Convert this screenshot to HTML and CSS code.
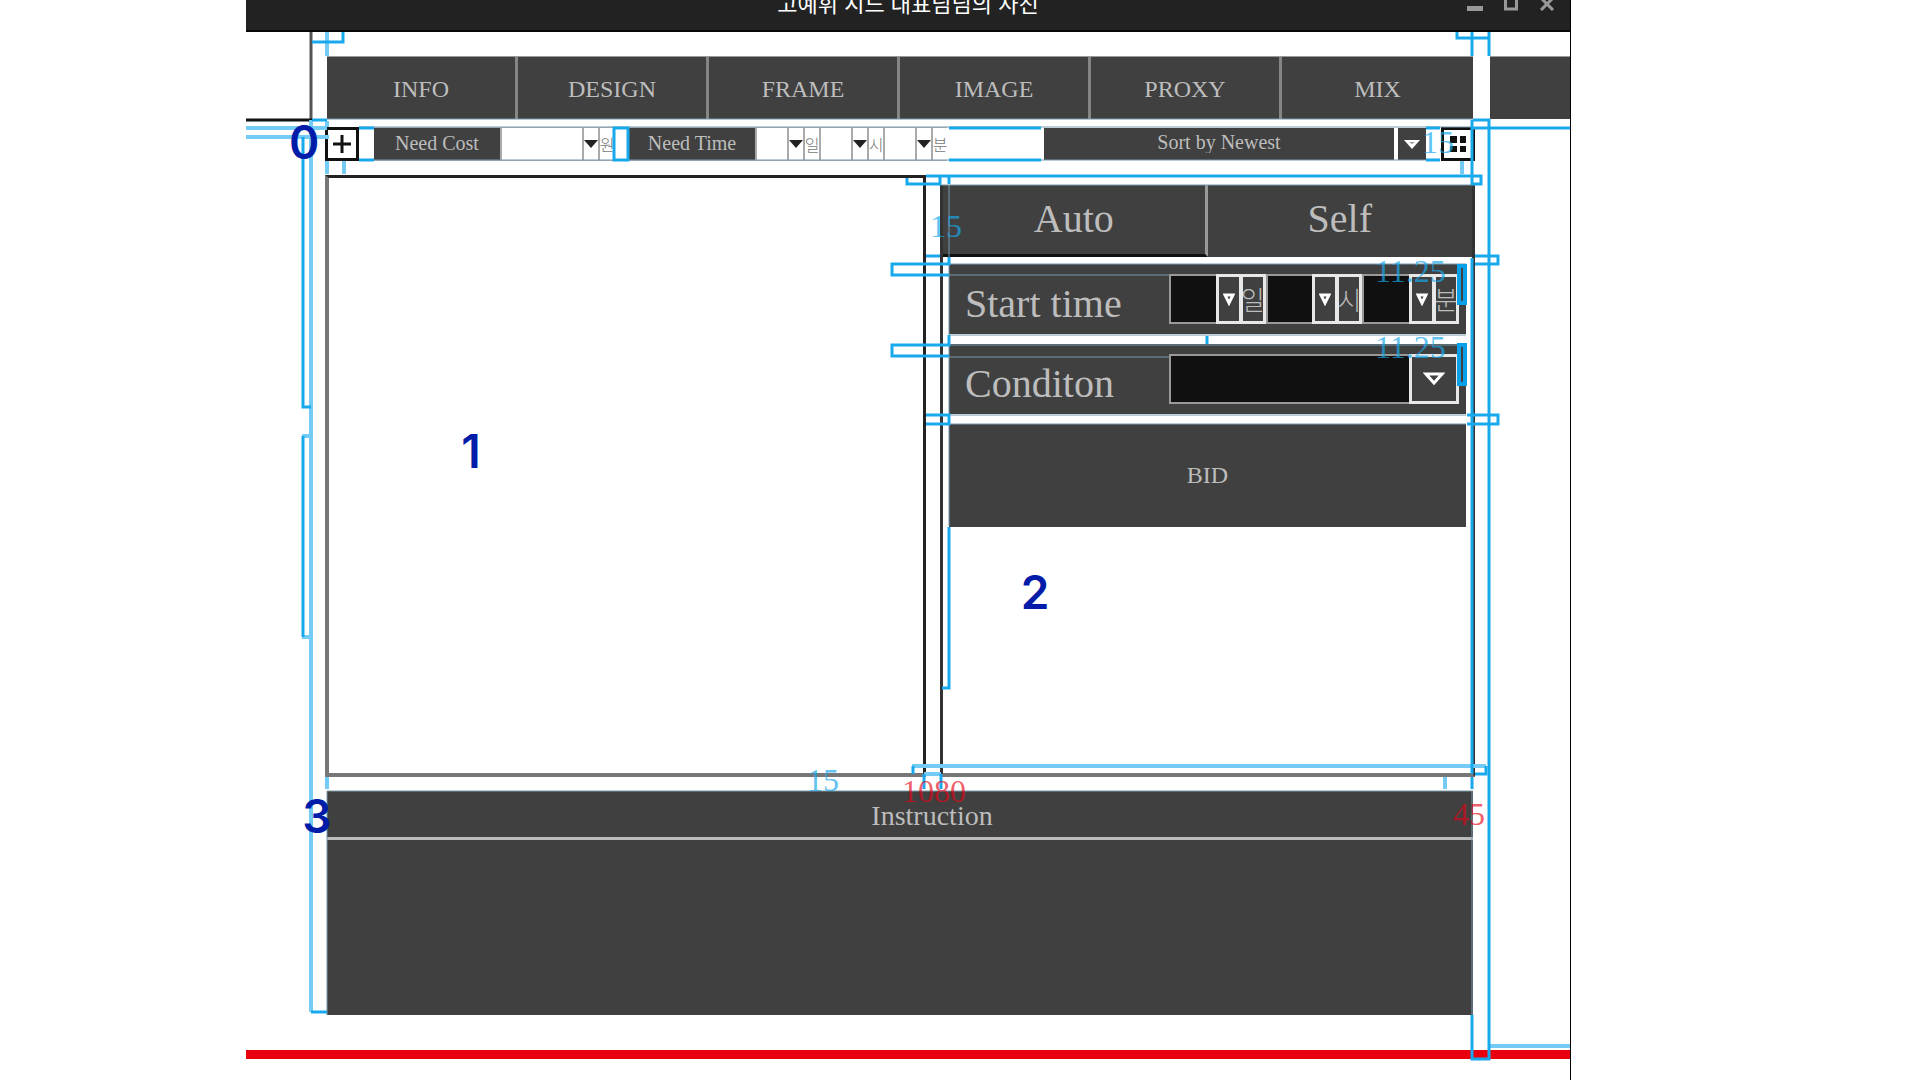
FILE: index.html
```html
<!DOCTYPE html>
<html lang="ko">
<head>
<meta charset="utf-8">
<title>고예휘 시드 대표님님의 사진</title>
<link rel="stylesheet" href="styles.css">
</head>
<body>
<div class="window">
  <header class="titlebar">
    <h1 class="title">고예휘 시드 대표님님의 사진</h1>
    <div class="window-buttons">
      <button type="button" aria-label="Minimize"><svg width="16" height="16"><path d="M0 13.500H16" stroke="#999" stroke-width="5"/></svg></button>
      <button type="button" aria-label="Maximize"><svg width="16" height="16"><rect x="2.500" y="3" width="11" height="11" fill="none" stroke="#999" stroke-width="3"/></svg></button>
      <button type="button" aria-label="Close"><svg width="16" height="16"><path d="M2 3L14 15M14 3L2 15" stroke="#999" stroke-width="3"/></svg></button>
    </div>
  </header>

  <div class="nav-row">
    <nav class="nav">
      <a href="#info">INFO</a>
      <a href="#design">DESIGN</a>
      <a href="#frame">FRAME</a>
      <a href="#image">IMAGE</a>
      <a href="#proxy">PROXY</a>
      <a href="#mix">MIX</a>
    </nav>
    <div class="nav-next"></div>
  </div>

  <main class="board">
    <div class="toolbar">
      <button type="button" class="square" aria-label="Add"><svg width="20" height="20"><path d="M10 1V19M1 10H19" stroke="#111" stroke-width="3"/></svg></button>
      <div class="filter">
        <label class="tag" for="cost">Need Cost</label>
        <div class="pick pick-wide">
          <select id="cost"></select>
          <span class="caret"><svg width="14" height="10"><path d="M0 1H14L7 9Z" fill="#222"/></svg></span>
          <label class="unit" for="cost">원</label>
        </div>
      </div>
      <div class="filter">
        <label class="tag" for="need-day">Need Time</label>
        <div class="pick">
          <select id="need-day"></select>
          <span class="caret"><svg width="14" height="10"><path d="M0 1H14L7 9Z" fill="#222"/></svg></span>
          <label class="unit" for="need-day">일</label>
        </div>
        <div class="pick">
          <select id="need-hour"></select>
          <span class="caret"><svg width="14" height="10"><path d="M0 1H14L7 9Z" fill="#222"/></svg></span>
          <label class="unit" for="need-hour">시</label>
        </div>
        <div class="pick">
          <select id="need-minute"></select>
          <span class="caret"><svg width="14" height="10"><path d="M0 1H14L7 9Z" fill="#222"/></svg></span>
          <label class="unit" for="need-minute">분</label>
        </div>
      </div>
      <div class="sort">
        <select aria-label="Sort order"><option>Sort by Newest</option></select>
        <span class="sort-caret"><svg width="16" height="10"><path d="M0 1H16L8 10Z" fill="#fff"/><path d="M5 3H11L8 5Z" fill="#999"/></svg></span>
      </div>
      <button type="button" class="square" aria-label="Grid view"><svg width="18" height="18"><path d="M1 1H8V8H1ZM11 1H17V8H11ZM1 11H8V17H1ZM11 11H17V17H11Z" fill="#111"/></svg></button>
    </div>

    <div class="panels">
      <section class="canvas"></section>
      <section class="bid-panel">
        <div class="tabs">
          <button type="button" class="tab tab-active">Auto</button>
          <button type="button" class="tab">Self</button>
        </div>
        <form class="bid-form">
          <div class="row">
            <label class="row-name" for="start-day">Start time</label>
            <div class="fields">
              <div class="dark-pick">
                <select id="start-day"></select>
                <span class="box"><svg width="12" height="13"><path d="M2 2H10L6 10Z" fill="none" stroke="#fff" stroke-width="3"/></svg></span>
                <label class="box" for="start-day">일</label>
              </div>
              <div class="dark-pick">
                <select id="start-hour"></select>
                <span class="box"><svg width="12" height="13"><path d="M2 2H10L6 10Z" fill="none" stroke="#fff" stroke-width="3"/></svg></span>
                <label class="box" for="start-hour">시</label>
              </div>
              <div class="dark-pick">
                <select id="start-minute"></select>
                <span class="box"><svg width="12" height="13"><path d="M2 2H10L6 10Z" fill="none" stroke="#fff" stroke-width="3"/></svg></span>
                <label class="box" for="start-minute">분</label>
              </div>
            </div>
          </div>
          <div class="row">
            <label class="row-name" for="condition">Conditon</label>
            <div class="fields">
              <div class="dark-pick">
                <select id="condition"></select>
                <span class="box box-wide"><svg width="22" height="14"><path d="M3 2H19L11 11Z" fill="none" stroke="#fff" stroke-width="3"/></svg></span>
              </div>
            </div>
          </div>
          <button type="submit" class="bid">BID</button>
        </form>
      </section>
    </div>

    <section class="instruction">
      <h2>Instruction</h2>
      <div class="instruction-body"></div>
    </section>
  </main>
  <div class="page-end"></div>

  <!-- Spacing guides drawn over the layout -->
  <svg class="guides" viewBox="246 0 1324 1080" preserveAspectRatio="none" aria-hidden="true">
    <g class="ink">
      <path d="M311 32V120" stroke="#555"/>
      <path d="M246 120H312" stroke="#111"/>
    </g>
    <g class="soft">
      <path d="M327 32V56M311 120V1012M327 121V127M327 161V174M344 161V174M1462 161V174M327 777V789M1445 777V789"/>
      <path d="M246 128H327M246 137H329M302 436H311M302 637H311M912 766H1486M1489 1046H1570M924 774H941"/>
    </g>
    <g class="thin">
      <path d="M327 119H1473M359 127H1473M359 160H1426M942 185H1473M949 264H1466M949 275H1170M949 335H1466M949 345H1466M949 357H1170M949 415H1466M949 424H1466M949 185V526M327 791H1473M327 791V1015M1472 791V1015"/>
    </g>
    <g class="strong">
      <path d="M312 42H343V32M312 120H327M303 137V407H311M303 436V637M311 1012H327"/>
      <path d="M1457 32V38H1489M1472 32V56M1489 32V56M1473 120H1489V1059H1472V1015M1472 120V185M1473 128H1570"/>
      <path d="M359 128H374M359 160H374M614 128H628V160H614ZM949 128H1041M949 160H1041M1426 128H1440M1426 160H1440"/>
      <path d="M926 176H1481V184H1472M907 178V184H940V176M949 176V184"/>
      <path d="M926 256H940M949 257V264H892V275H949M949 335V345H892V356H949M926 415H949V424H926M1207 336V344"/>
      <path d="M1475 256H1498V264H1475M1467 415H1498V424H1467M1472 258V774M949 527V688H942"/>
      <path d="M913 766V774M1486 766V774H1475M924 774V789M941 774V789M1472 777V789"/>
    </g>
    <path class="heavy" d="M1459 266H1465V303H1459ZM1459 345H1465V384H1459Z"/>
  </svg>
  <span class="size at-grid">15</span>
  <span class="size at-gutter">15</span>
  <span class="size at-start">11.25</span>
  <span class="size at-condition">11.25</span>
  <span class="size at-bottom">15</span>
  <span class="size total at-width">1080</span>
  <span class="size total at-edge">45</span>
  <span class="mark mark-0">0</span>
  <span class="mark mark-1">1</span>
  <span class="mark mark-2">2</span>
  <span class="mark mark-3">3</span>
</div>
</body>
</html>
```
FILE: styles.css
```css
* { box-sizing: border-box; }

body {
  margin: 0;
  background: #fff;
  font-family: "Liberation Serif", "Noto Sans CJK KR", serif;
  color: #bdbdbd;
}

button, select {
  margin: 0;
  padding: 0;
  border: 0;
  border-radius: 0;
  background: none;
  color: inherit;
  font: inherit;
  appearance: none;
}

svg { display: block; }

.window {
  position: relative;
  min-height: 100vh;
  margin: 0 349px 0 246px;
  border-right: 1px solid #000;
  overflow: hidden;
}

/* Title bar */
.titlebar {
  display: grid;
  grid-template-columns: 1fr auto 1fr;
  height: 32px;
  background: #222;
  border-bottom: 2px solid #080808;
}
.title {
  grid-column: 2;
  margin: -14px 0 0;
  font: 400 22px/32px "Noto Sans CJK KR", sans-serif;
  color: #fff;
}
.window-buttons {
  display: flex;
  justify-content: flex-end;
  gap: 20px;
  height: 16px;
  margin-top: -5px;
  padding-right: 15px;
}

/* Navigation */
.nav-row {
  display: flex;
  gap: 17px;
  margin-top: 24px;
  padding-left: 81px;
}
.nav {
  display: grid;
  grid-template-columns: repeat(6, 1fr);
  flex: 1;
  height: 63px;
  background: #404040;
  border-top: 1px solid #999;
}
.nav a {
  display: flex;
  align-items: center;
  justify-content: center;
  padding-top: 2px;
  border-right: 3px solid #858585;
  color: inherit;
  font-size: 24px;
  text-decoration: none;
}
.nav a:last-child { border-right: 0; }
.nav-next {
  width: 80px;
  background: #404040;
  border-top: 1px solid #999;
}

/* Filters */
.board { margin: 8px 95px 0 79px; }
.toolbar {
  display: flex;
  gap: 15px;
  height: 34px;
  font-size: 20px;
}
.square {
  display: flex;
  align-items: center;
  justify-content: center;
  width: 34px;
  border: 3px solid #111;
  background: #fff;
}
.filter {
  display: flex;
  border: 1px solid #aab4ba;
  border-width: 1px 0;
}
.tag {
  width: 126px;
  background: #404040;
  line-height: 30px;
  text-align: center;
}
.pick {
  display: flex;
  width: 64px;
  border-left: 2px solid #aaa;
}
.pick-wide { width: 114px; }
.pick select {
  flex: 1;
  min-width: 0;
  background: #fff;
}
.caret, .unit {
  display: flex;
  align-items: center;
  justify-content: center;
  width: 16px;
  border-left: 2px solid #aaa;
}
.unit {
  overflow: hidden;
  color: #777;
  font: 300 16px/30px "Noto Sans CJK KR", sans-serif;
}
.sort {
  display: flex;
  flex: 1;
  gap: 4px;
  margin-left: 82px;
  padding: 1px 0;
}
.sort select {
  flex: 1;
  padding-bottom: 4px;
  background: #404040;
  text-align: center;
  text-align-last: center;
}
.sort-caret {
  display: flex;
  align-items: center;
  justify-content: center;
  width: 28px;
  background: #404040;
}

/* Panels */
.panels {
  display: grid;
  grid-template-columns: 601fr 535fr;
  gap: 14px;
  height: 602px;
  margin-top: 14px;
}
.canvas {
  border: 3px solid #222;
  border-left: 4px solid #777;
  border-bottom: 4px solid #777;
}
.bid-panel {
  margin-top: 10px;
  border: 3px solid #333;
  border-top: 0;
  border-bottom: 4px solid #777;
}
.tabs {
  display: grid;
  grid-template-columns: 1fr 1fr;
  height: 72px;
  font-size: 40px;
}
.tab {
  padding-bottom: 6px;
  background: #404040;
}
.tab-active {
  padding-bottom: 3px;
  border-right: 3px solid #999;
  border-bottom: 3px solid #111;
}
.bid-form {
  display: grid;
  gap: 10px;
  padding: 7px 6px 0;
}
.row {
  display: flex;
  align-items: center;
  justify-content: space-between;
  height: 70px;
  padding: 0 7px 0 16px;
  background: #404040;
}
.row-name {
  padding-top: 8px;
  font-size: 40px;
}
.fields {
  display: flex;
  width: 290px;
  height: 50px;
}
.dark-pick {
  display: flex;
  flex: 1;
  border: 2px solid #999;
}
.dark-pick select {
  flex: 1;
  min-width: 0;
  background: #101010;
}
.box {
  display: flex;
  align-items: center;
  justify-content: center;
  width: 26px;
  margin: -2px -2px -2px 0;
  border: 3px solid #e8e8e8;
  overflow: hidden;
  font: 300 26px/30px "Noto Sans CJK KR", sans-serif;
}
.box-wide { width: 50px; }
.bid {
  height: 103px;
  background: #404040;
  font-size: 24px;
}

/* Instruction */
.instruction {
  margin: 14px 2px 0;
  background: #404040;
}
.instruction h2 {
  height: 49px;
  margin: 0;
  padding-left: 64px;
  border-bottom: 3px solid #bbb;
  font-size: 28px;
  font-weight: 400;
  line-height: 50px;
  text-align: center;
}
.instruction-body { height: 175px; }
.page-end {
  height: 9px;
  margin-top: 35px;
  background: #e8000f;
}

/* Guides and notes over the layout */
.guides {
  position: absolute;
  top: 0;
  left: 0;
  width: 100%;
  height: 1080px;
  pointer-events: none;
}
.guides path { fill: none; }
.ink, .strong { stroke-width: 3; }
.strong { stroke: #18a9ec; }
.soft { stroke: #74cbf5; stroke-width: 4; }
.thin { stroke: #7898a8; stroke-width: 1; }
.heavy { stroke: #08a0e8; stroke-width: 4; }

.size {
  position: absolute;
  color: rgba(24, 169, 236, 0.7);
  font-size: 32px;
  line-height: 32px;
}
.total { color: rgba(232, 0, 20, 0.65); }
.at-grid { top: 126px; left: 1176px; }
.at-gutter { top: 210px; left: 684px; }
.at-start { top: 255px; left: 1129px; }
.at-condition { top: 331px; left: 1129px; }
.at-bottom { top: 764px; left: 561px; }
.at-width { top: 775px; left: 656px; }
.at-edge { top: 798px; left: 1207px; }

.mark {
  position: absolute;
  width: 30px;
  color: #001ca8;
  font: 600 46px/48px Inter, sans-serif;
  text-align: center;
}
.mark-0 { top: 118px; left: 43px; }
.mark-1 { top: 427px; left: 210px; }
.mark-2 { top: 568px; left: 774px; }
.mark-3 { top: 792px; left: 56px; }
```
